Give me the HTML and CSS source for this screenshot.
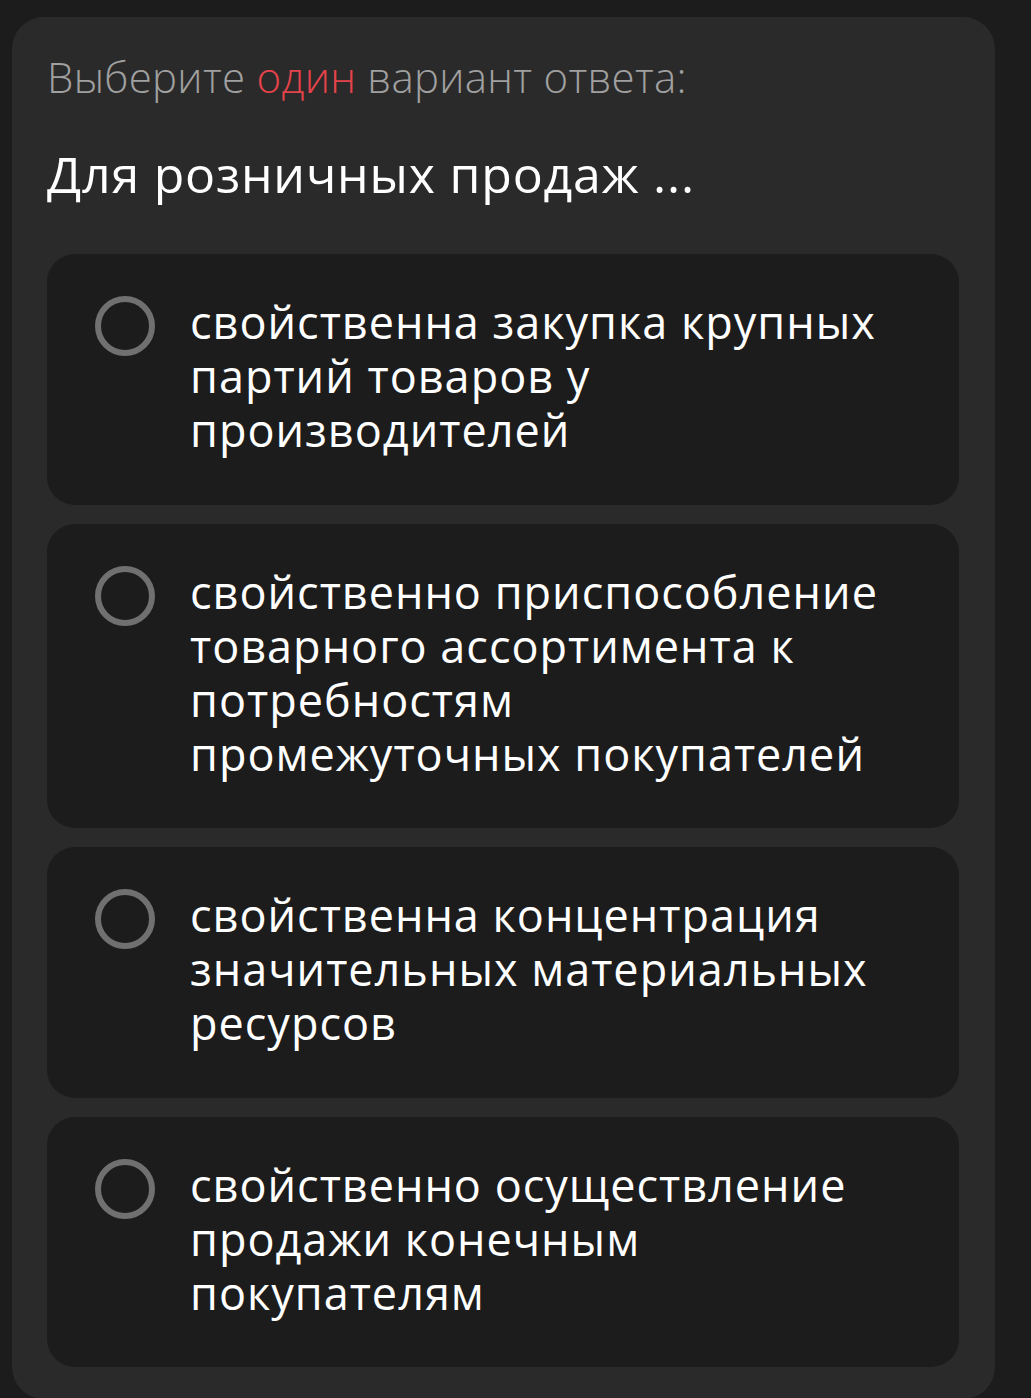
FILE: index.html
```html
<!DOCTYPE html>
<html lang="ru">
<head>
  <meta charset="UTF-8" />
  <meta name="viewport" content="width=device-width, initial-scale=1.0" />
  <title>Тест</title>
  <link rel="stylesheet" href="styles.css">
</head>
<body>
  <div class="card">
    <p class="hint">Выберите <span class="accent">один</span> вариант ответа:</p>
    <h1 class="question">Для розничных продаж ...</h1>

    <div class="options">
      <label class="option">
        <span class="radio"></span>
        <span class="option-text">свойственна закупка крупных партий товаров у производителей</span>
      </label>
      <label class="option">
        <span class="radio"></span>
        <span class="option-text">свойственно приспособление товарного ассортимента к потребностям промежуточных покупателей</span>
      </label>
      <label class="option">
        <span class="radio"></span>
        <span class="option-text">свойственна концентрация значительных материальных ресурсов</span>
      </label>
      <label class="option">
        <span class="radio"></span>
        <span class="option-text">свойственно осуществление продажи конечным покупателям</span>
      </label>
    </div>
  </div>
</body>
</html>
```

FILE: styles.css
```css
:root {
  --bg-color: #1c1c1c;
  --card-bg: #2a2a2a;
  --option-bg: #1c1c1c;
  --text-color: #ffffff;
  --muted-color: #a0a0a0;
  --accent-color: #e5434b;
  --radio-color: #707070;
}

html, body {
  margin: 0;
  padding: 0;
}

body {
  background-color: var(--bg-color);
  color: var(--text-color);
  font-family: "Open Sans", "Noto Sans", sans-serif;
  padding: 17px 36px 0 12px;
}

.card {
  background-color: var(--card-bg);
  border-radius: 32px;
  padding: 35px 36px 32px 35px;
}

.hint {
  margin: 0;
  font-size: 42px;
  line-height: 50px;
  font-weight: 300;
  letter-spacing: 0.3px;
  color: var(--muted-color);
}

.accent {
  color: var(--accent-color);
}

.question {
  margin: 42px 0 50px;
  font-size: 50px;
  line-height: 60px;
  font-weight: 500;
  letter-spacing: 0.8px;
}

.options {
  display: flex;
  flex-direction: column;
  gap: 19px;
}

.option {
  display: flex;
  align-items: flex-start;
  gap: 35px;
  background-color: var(--option-bg);
  border-radius: 28px;
  padding: 41px 62px 47.5px 48px;
  cursor: pointer;
}

.radio {
  flex: none;
  box-sizing: border-box;
  width: 60px;
  height: 60px;
  margin-top: 1px;
  border: 6px solid var(--radio-color);
  border-radius: 50%;
}

.option-text {
  font-size: 45px;
  line-height: 54px;
  letter-spacing: 1px;
  color: var(--text-color);
}
```
